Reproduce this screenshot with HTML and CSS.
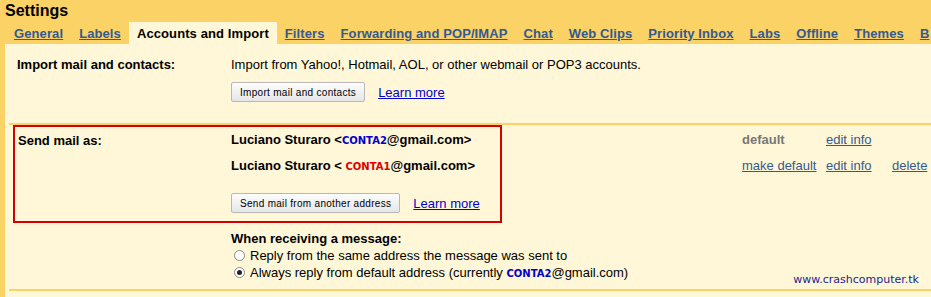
FILE: index.html
```html
<!DOCTYPE html>
<html lang="en">
<head>
	<meta charset="UTF-8">
	<title>Settings</title>
	<link rel="stylesheet" href="styles.css">
</head>
<body>
	<div class="title">Settings</div>
	<div class="tabs">
		<a href="javascript:;">General</a>
		<a href="javascript:;">Labels</a>
		<span class="active">Accounts and Import</span>
		<a href="javascript:;">Filters</a>
		<a href="javascript:;">Forwarding and POP/IMAP</a>
		<a href="javascript:;">Chat</a>
		<a href="javascript:;">Web Clips</a>
		<a href="javascript:;">Priority Inbox</a>
		<a href="javascript:;">Labs</a>
		<a href="javascript:;">Offline</a>
		<a href="javascript:;">Themes</a>
		<a href="javascript:;">B</a>
	</div>
	<div class="panel">
		<div class="section importSec">
			<div class="label">Import mail and contacts:</div>
			<div class="value">
				<div>Import from Yahoo!, Hotmail, AOL, or other webmail or POP3 accounts.</div>
				<div class="btnRow">
					<button class="btn">Import mail and contacts</button>
					<a class="learn" href="javascript:;">Learn more</a>
				</div>
			</div>
		</div>
		<div class="section sendSec">
			<div class="mark"></div>
			<div class="label">Send mail as:</div>
			<div class="value">
				<div class="addr">
					<b class="name">Luciano Sturaro &lt;<span class="acc blue">CONTA2</span>@gmail.com&gt;</b>
					<span class="act c1 grey">default</span>
					<a class="act c2" href="javascript:;">edit info</a>
				</div>
				<div class="addr">
					<b class="name">Luciano Sturaro &lt; <span class="acc red">CONTA1</span>@gmail.com&gt;</b>
					<a class="act c1" href="javascript:;">make default</a>
					<a class="act c2" href="javascript:;">edit info</a>
					<a class="act c3" href="javascript:;">delete</a>
				</div>
				<div class="btnRow">
					<button class="btn">Send mail from another address</button>
					<a class="learn" href="javascript:;">Learn more</a>
				</div>
				<div class="reply">
					<b>When receiving a message:</b>
					<label><span class="radio"></span>Reply from the same address the message was sent to</label>
					<label><span class="radio on"></span>Always reply from default address (currently <span class="acc blue">CONTA2</span>@gmail.com)</label>
				</div>
			</div>
			<div class="site">www.crashcomputer.tk</div>
		</div>
	</div>
</body>
</html>
```

FILE: styles.css
```css
body{
	margin: 0;
	background: #fad266;
	font-family: "Liberation Sans", Arial, sans-serif;
	font-size: 13px;
	color: #000;
	overflow: hidden;
}
.title{
	font-weight: bold;
	font-size: 16px;
	padding: 2px 0 0 5px;
	height: 20px;
}
.tabs{
	display: flex;
	padding-left: 6px;
	white-space: nowrap;
	font-weight: bold;
	letter-spacing: 0.1px;
}
.tabs a, .tabs span{
	padding: 4px 8px 3px;
	line-height: 15px;
}
.tabs a{
	color: #35598f;
}
.tabs .active{
	background: #fff7d7;
	color: #000;
}
.panel{
	margin-left: 5px;
	background: #fff7d7;
	height: 260px;
	padding-left: 4px;
}
.section{
	display: flex;
	position: relative;
	border-bottom: 2px solid #fad266;
}
.label{
	width: 214px;
	padding-left: 8px;
	font-weight: bold;
	flex: none;
}
.value{
	flex: 1;
}
.importSec{
	padding: 13px 0 21px;
}
.btnRow{
	display: flex;
	align-items: center;
	margin-top: 10px;
}
.btn{
	font-family: "Liberation Sans", Arial, sans-serif;
	font-size: 10px;
	letter-spacing: 0.3px;
	padding: 0 8px;
	height: 20px;
	border: 1px solid #b8b8b8;
	border-radius: 2px;
	background: linear-gradient(#fdfdfd, #e6e6e6);
	color: #000;
	margin-right: 13px;
}
.learn{
	color: #0000cc;
}
.sendSec{
	padding: 7px 0 0;
	height: 157px;
}
.sendSec .label{
	padding-top: 1px;
	padding-left: 9px;
	width: 213px;
}
.addr{
	display: flex;
	height: 26px;
	line-height: 15px;
}
.name{
	width: 511px;
	flex: none;
}
.acc{
	font-family: "DejaVu Sans", Verdana, sans-serif;
	font-size: 10px;
	font-weight: bold;
}
.blue{
	color: #0000cc;
}
.red{
	color: #dd0000;
}
.act{
	flex: none;
	color: #35598f;
}
.c1{
	width: 84px;
}
.c2{
	width: 66px;
}
.grey{
	color: #777;
	font-weight: bold;
}
.sendSec .btnRow{
	margin-top: 9px;
}
.reply{
	margin-top: 18px;
	line-height: 16px;
}
.reply b, .reply label{
	display: block;
}
.reply label{
	margin-top: 1px;
}
.radio{
	display: inline-block;
	width: 9px;
	height: 9px;
	border: 1px solid #888;
	border-radius: 50%;
	background: #fff;
	margin: 0 5px 0 3px;
	vertical-align: -1px;
	position: relative;
}
.radio.on::after{
	content: "";
	position: absolute;
	left: 2px;
	top: 2px;
	width: 5px;
	height: 5px;
	border-radius: 50%;
	background: #222;
}
.mark{
	position: absolute;
	left: 4px;
	top: 0;
	width: 485px;
	height: 94px;
	border: 2px solid #d40000;
}
.site{
	position: absolute;
	right: 12px;
	bottom: 3px;
	font-family: "DejaVu Sans", Verdana, sans-serif;
	font-size: 11px;
	color: #1c1c8c;
}
```
